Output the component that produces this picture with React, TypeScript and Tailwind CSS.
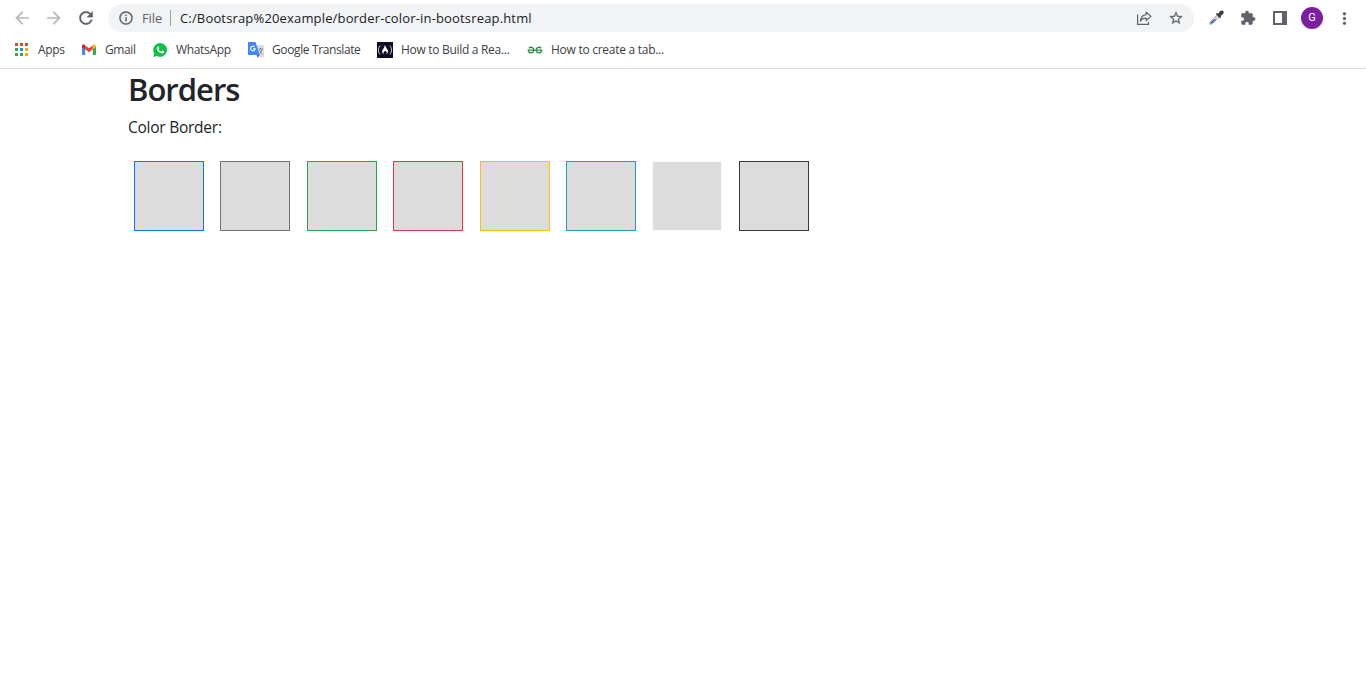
import type { ReactNode } from 'react';

const MdPath = ({ d, size = 16, className = '' }: { d: string; size?: number; className?: string }) => (
  <svg width={size} height={size} viewBox="0 0 24 24" fill="currentColor" stroke="currentColor" strokeWidth=".3" className={`shrink-0 ${className}`}>
    <path d={d} />
  </svg>
);

const BACK = 'M20 11H7.83l5.59-5.59L12 4l-8 8 8 8 1.41-1.41L7.83 13H20v-2z';
const FORWARD = 'M12 4l-1.41 1.41L16.17 11H4v2h12.17l-5.58 5.59L12 20l8-8z';
const RELOAD =
  'M17.65 6.35C16.2 4.9 14.21 4 12 4c-4.42 0-7.99 3.58-7.99 8s3.57 8 7.99 8c3.73 0 6.84-2.55 7.73-6h-2.08c-.82 2.33-3.04 4-5.65 4-3.31 0-6-2.69-6-6s2.69-6 6-6c1.66 0 3.14.69 4.22 1.78L13 11h7V4l-2.35 2.35z';
const INFO =
  'M11 7h2v2h-2zm0 4h2v6h-2zm1-9C6.48 2 2 6.48 2 12s4.48 10 10 10 10-4.48 10-10S17.52 2 12 2zm0 18c-4.41 0-8-3.59-8-8s3.59-8 8-8 8 3.59 8 8-3.59 8-8 8z';
const STAR =
  'M22 9.24l-7.19-.62L12 2 9.19 8.63 2 9.24l5.46 4.73L5.82 21 12 17.27 18.18 21l-1.63-7.03L22 9.24zM12 15.4l-3.76 2.27 1-4.28-3.32-2.88 4.38-.38L12 6.1l1.71 4.04 4.38.38-3.32 2.88 1 4.28L12 15.4z';
const PUZZLE =
  'M20.5 11H19V7c0-1.1-.9-2-2-2h-4V3.5a2.5 2.5 0 0 0-5 0V5H4c-1.1 0-1.99.9-1.99 2v3.8H3.5c1.49 0 2.7 1.21 2.7 2.7s-1.21 2.7-2.7 2.7H2V20c0 1.1.9 2 2 2h3.8v-1.5c0-1.49 1.21-2.7 2.7-2.7s2.7 1.21 2.7 2.7V22H17c1.1 0 2-.9 2-2v-4h1.5a2.5 2.5 0 0 0 0-5z';
const DOTS =
  'M12 8c1.1 0 2-.9 2-2s-.9-2-2-2-2 .9-2 2 .9 2 2 2zm0 2c-1.1 0-2 .9-2 2s.9 2 2 2 2-.9 2-2-.9-2-2-2zm0 6c-1.1 0-2 .9-2 2s.9 2 2 2 2-.9 2-2-.9-2-2-2z';

const ShareIcon = () => (
  <svg width="16" height="16" viewBox="0 0 16 16" fill="none" stroke="#5f6368" strokeWidth="1.2" className="shrink-0">
    <path d="M1.6 4.5V14.4H12.5V11.8" />
    <path d="M10.2 2.3L15 6.4L10.2 10.5V8.2C7.4 8.2 5.6 9.2 4.3 11.3C4.7 8 6.6 5 10.2 4.6Z" strokeLinejoin="round" />
  </svg>
);

const DropperIcon = () => (
  <svg width="16" height="16" viewBox="0 0 16 16" className="shrink-0">
    <path d="M1.8 14.2L2.3 12L9 5.3L10.9 7.2L4.2 13.8Z" fill="#dfe3ee" stroke="#8c9097" strokeWidth=".9" />
    <path d="M2.5 13.5L3 12.3L6.2 9.2H8.2L4 13.2Z" fill="#2854dc" />
    <path d="M7.8 4.1L9.1 3L10.2 3.7L12 1.3C13 .2 14.4 .2 15.2 1.1C16 2 15.8 3.4 14.7 4.2L12.6 5.9L13.2 7L12 8.3Z" fill="#3b3b3d" />
  </svg>
);

const PanelIcon = () => (
  <svg width="14" height="14" viewBox="0 0 14 14" className="shrink-0">
    <path fillRule="evenodd" d="M0 0H14V14H0ZM2 2V12H9V2Z" fill="#5f6368" />
  </svg>
);

const AppsIcon = () => (
  <svg width="16" height="16" viewBox="0 0 16 16">
    <path d="M1 1h3v3H1zM6 1h3v3H6zM11 1h3v3h-3z" fill="#ea4335" />
    <path d="M1 6h3v3H1zM1 11h3v3H1z" fill="#34a853" />
    <path d="M6 6h3v3H6z" fill="#1a8cff" />
    <path d="M11 6h3v3h-3zM11 11h3v3h-3z" fill="#f9ab00" />
    <path d="M6 11h3v3H6z" fill="#34a853" />
  </svg>
);

const GmailIcon = () => (
  <svg width="16" height="16" viewBox="0 0 16 16">
    <path d="M1 4.5V12.2Q1 13 1.9 13H4.2V6.5Z" fill="#4285f4" />
    <path d="M11.8 6.5V13H14.1Q15 13 15 12.2V4.5Z" fill="#34a853" />
    <path d="M11.8 3.5V7.3L15 5V4.1C15 2.5 13.4 2.1 12.3 3Z" fill="#fbbc04" />
    <path d="M4.2 7.3V3.4L8 6.2L11.8 3.4V7.3L8 10.2Z" fill="#ea4335" />
    <path d="M1 4.1V5L4.2 7.3V3.4L3.7 3C2.6 2.1 1 2.5 1 4.1Z" fill="#c5221f" />
  </svg>
);

const WhatsAppIcon = () => (
  <svg width="16" height="16" viewBox="0 0 16 16">
    <path d="M8.2 1A6.9 6.9 0 1 1 4.9 14L1.3 14.9L2.3 11.5A6.9 6.9 0 0 1 8.2 1Z" fill="#0cc143" />
    <path d="M5.7 4.5C6.1 4.3 6.5 4.4 6.7 4.9L7.2 6.1C7.3 6.5 6.9 6.9 6.6 7.2C7.2 8.4 8 9.1 9.2 9.6L10 8.7C10.2 8.5 10.4 8.4 10.7 8.6L12 9.3C12.3 9.5 12.3 9.7 12.2 10.1C11.9 11.1 10.9 11.6 10 11.5C7.3 11.2 5 8.8 4.7 6.6C4.6 5.7 5 4.9 5.7 4.5Z" fill="#fff" />
  </svg>
);

const TranslateIcon = () => (
  <svg width="16" height="16" viewBox="0 0 16 16">
    <path d="M6 3H15Q16 3 16 4V14.5Q16 15.5 15 15.5H9Z" fill="#dadce0" />
    <path d="M8.6 12.8H12L9.3 15.6Z" fill="#3267d6" />
    <path d="M1 0H7.5L11.7 12.9H1Q0 12.9 0 11.9V1Q0 0 1 0Z" fill="#4285f4" />
    <path d="M6.5 4.9A2.3 2.3 0 1 0 7.1 6.8H5" stroke="#fff" strokeWidth="1.1" fill="none" />
    <path d="M10.6 7H15M12.5 6V7M14 7.2C13.5 9.5 12.6 10.7 11.6 11.6M11.5 8.2C12 10 13 11.1 14.4 12.1" stroke="#747b83" strokeWidth=".9" fill="none" />
  </svg>
);

const CampIcon = () => (
  <svg width="16" height="16" viewBox="0 0 16 16">
    <path d="M0 0H16V16H0Z" fill="#0a0a23" />
    <path d="M3 3.5Q-.2 8 3 12.5M13 3.5Q16.2 8 13 12.5" stroke="#c4c4cc" strokeWidth="1" fill="none" />
    <path d="M7.3 3.2C9.2 4.1 8.9 5.8 10 7C11.7 9 11 11.3 9.3 12.2C10.1 10.8 9.7 9.6 8.6 8.8C8.4 9.7 7.8 9.5 7.5 8.9C6.3 10 6.2 11.2 6.9 12.2C4.8 11.2 4.6 9.2 5.9 7.5C6.8 6.2 7.9 5 7.3 3.2Z" fill="#fff" />
  </svg>
);

const GeeksIcon = () => (
  <svg width="16" height="16" viewBox="0 0 16 16" fill="none" stroke="#2f8d46" strokeWidth="1.3">
    <path d="M1.9 6.3C3 4.7 6.8 4.8 6.8 8.1C6.8 11.9 1.5 11.9 1.3 8.2H14.7C14.5 11.9 9.2 11.9 9.2 8.1C9.2 4.8 13 4.7 14.1 6.3" />
  </svg>
);

type Bookmark = { label: string; icon: ReactNode; width: string; tracking: string };

const bookmarks: Bookmark[] = [
  { label: 'Apps', icon: <AppsIcon />, width: 'w-[67px]', tracking: 'tracking-[-0.3px]' },
  { label: 'Gmail', icon: <GmailIcon />, width: 'w-[71px]', tracking: 'tracking-[-0.4px]' },
  { label: 'WhatsApp', icon: <WhatsAppIcon />, width: 'w-[96px]', tracking: 'tracking-[-0.33px]' },
  { label: 'Google Translate', icon: <TranslateIcon />, width: 'w-[129px]', tracking: 'tracking-[-0.38px]' },
  { label: 'How to Build a Rea...', icon: <CampIcon />, width: 'w-[150px]', tracking: 'tracking-[-0.3px]' },
  { label: 'How to create a tab...', icon: <GeeksIcon />, width: 'w-[150px]', tracking: 'tracking-[-0.27px]' },
];

const boxes = [
  'border-[#007bff]',
  'border-[#6c757d]',
  'border-[#28a745]',
  'border-[#dc3545]',
  'border-[#ffc107]',
  'border-[#17a2b8]',
  'border-[#f8f9fa]',
  'border-[#343a40]',
];

export default function App() {
  return (
    <div className="h-[694px] w-[1366px] overflow-hidden bg-white font-['Open_Sans','Noto_Sans',sans-serif]">
      <header className="h-[69px] border-b border-[#dadce0]">
        <div className="flex h-9 items-center text-[#5f6368]">
          <div className="flex w-[108px] items-center gap-3 pl-3">
            <MdPath d={BACK} size={20} className="text-[#babcbe]" />
            <MdPath d={FORWARD} size={20} className="text-[#babcbe]" />
            <MdPath d={RELOAD} size={20} />
          </div>
          <div className="flex h-7 w-[1086px] items-center rounded-full bg-[#f1f3f4] pr-[10px] pl-[10px]">
            <MdPath d={INFO} />
            <span className="ml-2 w-[28px] text-[13px] leading-5 tracking-[-0.1px] whitespace-nowrap">File</span>
            <span className="h-4 w-px bg-[#9aa0a6]" />
            <span className="ml-[9px] text-[13px] leading-5 tracking-[0.16px] whitespace-nowrap text-[#202124]">
              C:/Bootsrap%20example/border-color-in-bootsreap.html
            </span>
            <div className="ml-auto flex items-center gap-4">
              <ShareIcon />
              <MdPath d={STAR} />
            </div>
          </div>
          <div className="flex items-center pl-[14px]">
            <DropperIcon />
            <MdPath d={PUZZLE} className="ml-4" />
            <span className="ml-[17px]">
              <PanelIcon />
            </span>
            <span className="ml-[14px] flex h-[22px] w-[22px] items-center justify-center rounded-full bg-[#7b1fa2] font-[Roboto,sans-serif] text-[11px] text-white">
              G
            </span>
            <MdPath d={DOTS} size={19} className="ml-3" />
          </div>
        </div>
        <nav className="flex h-7 items-center pl-[14px]">
          {bookmarks.map((b) => (
            <div key={b.label} className={`flex shrink-0 items-center gap-2 ${b.width}`}>
              <span className="shrink-0">{b.icon}</span>
              <span className={`text-[12px] leading-4 whitespace-nowrap text-[#3c4043] ${b.tracking}`}>{b.label}</span>
            </div>
          ))}
        </nav>
      </header>
      <main className="pl-32 text-[#212529]">
        <h2 className="pt-px text-[31px] leading-[38px] font-semibold tracking-[-1px]">Borders</h2>
        <p className="mt-[7px] text-[15.5px] leading-6 tracking-[-0.25px]">Color Border:</p>
        <div className="mt-[22px] flex gap-[16.41px] pl-[6px]">
          {boxes.map((color) => (
            <span key={color} className={`h-[70px] w-[70px] shrink-0 border bg-[#dcdcdc] ${color}`} />
          ))}
        </div>
      </main>
    </div>
  );
}
